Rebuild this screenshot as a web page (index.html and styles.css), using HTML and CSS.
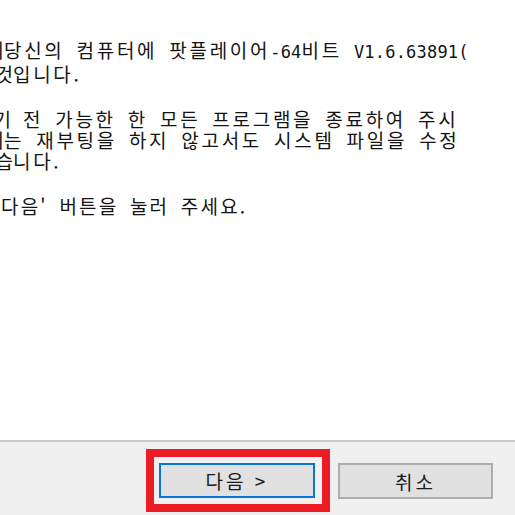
FILE: index.html
```html
<!DOCTYPE html>
<html lang="ko">
<head>
<meta charset="utf-8">
<title>팟플레이어 설치</title>
<link rel="stylesheet" href="styles.css">
</head>
<body>
<div class="dialog">
  <main class="content">
    <p class="para">
      <span class="line"><span class="cut cut-bar">이</span>당신의 컴퓨터에 팟플레이어<span class="latin">-64</span>비트 <span class="latin">V1.6.63891(</span></span>
      <span class="line"><span class="cut cut-wide">것</span>입니다.</span>
    </p>
    <p class="para">
      <span class="line"><span class="cut cut-ki">하기</span> 전 가능한 한 모든 프로그램을 종료하여 주시</span>
      <span class="line"><span class="cut cut-bar">이</span>는 재부팅을 하지 않고서도 시스템 파일을 수정</span>
      <span class="line"><span class="cut cut-wide">습</span>니다.</span>
    </p>
    <p class="para">
      <span class="line line-pad">다음' 버튼을 눌러 주세요.</span>
    </p>
  </main>
  <div class="separator"></div>
  <footer class="footer">
    <span class="highlight">
      <button class="btn btn-default" type="button">다음 &gt;</button>
    </span>
    <button class="btn btn-cancel" type="button">취소</button>
  </footer>
</div>
</body>
</html>
```

FILE: styles.css
```css
html, body {
  margin: 0;
  padding: 0;
}

body {
  width: 515px;
  height: 515px;
  overflow: hidden;
  background: #f0f0f0;
  font-family: "Noto Sans CJK KR", "Noto Sans", sans-serif;
  color: #141414;
}

.dialog {
  display: flex;
  flex-direction: column;
  height: 515px;
}

.content {
  height: 440px;
  background: #ffffff;
  padding-top: 39px;
  box-sizing: border-box;
  overflow: hidden;
}

.para {
  margin: 0 0 24px 0;
  font-size: 19px;
  line-height: 21px;
  letter-spacing: 2.7px;
  word-spacing: 4px;
}

.line {
  display: block;
  white-space: nowrap;
}

.line-pad {
  padding-left: 1px;
  letter-spacing: 2.2px;
}

.latin {
  font-family: "DejaVu Sans Mono", "Liberation Mono", monospace;
  font-size: 17px;
  letter-spacing: 0.2px;
  word-spacing: 0;
}

.cut {
  display: inline-block;
  overflow: hidden;
  direction: rtl;
  vertical-align: top;
  white-space: nowrap;
  letter-spacing: 0;
}

.cut-bar {
  width: 4px;
}

.cut-wide {
  width: 13px;
}

.cut-ki {
  width: 11px;
}

.separator {
  height: 2px;
  background: #c9c9c9;
}

.footer {
  flex: 1;
  display: flex;
  justify-content: flex-end;
  align-items: flex-start;
  gap: 8px;
  padding: 7px 22px 0 0;
  background: #f0f0f0;
}

.highlight {
  display: block;
  border: 8px solid #ec1c24;
  padding: 6px 7px 6px 5px;
}

.btn {
  display: block;
  width: 156px;
  height: 35px;
  margin: 0;
  padding: 0;
  background: #e1e1e1;
  border: 2px solid #adadad;
  font-family: "Noto Sans CJK KR", "Noto Sans", sans-serif;
  font-size: 19px;
  letter-spacing: 3px;
  word-spacing: 0;
  color: #1a1a1a;
}

.btn-default {
  border-color: #0a74d4;
}

.btn-cancel {
  margin-top: 14px;
  width: 155px;
  height: 36px;
}
```
